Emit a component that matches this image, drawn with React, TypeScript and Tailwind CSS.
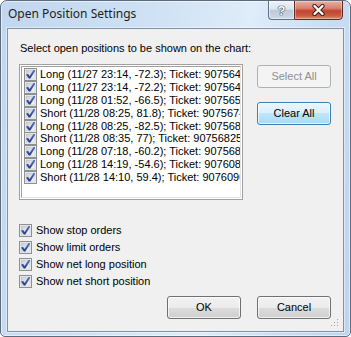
import React from "react";

const items = [
  "Long (11/27 23:14, -72.3); Ticket: 90756471",
  "Long (11/27 23:14, -72.2); Ticket: 90756472",
  "Long (11/28 01:52, -66.5); Ticket: 90756538",
  "Short (11/28 08:25, 81.8); Ticket: 90756749",
  "Long (11/28 08:25, -82.5); Ticket: 90756812",
  "Short (11/28 08:35, 77); Ticket: 90756825",
  "Long (11/28 07:18, -60.2); Ticket: 90756877",
  "Long (11/28 14:19, -54.6); Ticket: 90760835",
  "Short (11/28 14:10, 59.4); Ticket: 90760902",
];

const options = [
  "Show stop orders",
  "Show limit orders",
  "Show net long position",
  "Show net short position",
];

function Check() {
  return (
    <svg width="13" height="13" viewBox="0 0 13 13" className="shrink-0 block">
      <defs>
        <linearGradient id="cbg" x1="0" y1="0" x2="1" y2="1">
          <stop offset="0" stopColor="#c9ced5" />
          <stop offset="1" stopColor="#f7f7f7" />
        </linearGradient>
        <linearGradient id="cbm" x1="0" y1="0" x2="0" y2="1">
          <stop offset="0" stopColor="#6079c4" />
          <stop offset="1" stopColor="#1f3a8a" />
        </linearGradient>
      </defs>
      <rect x="0.5" y="0.5" width="12" height="12" fill="#f4f4f4" stroke="#8f8f8f" />
      <rect x="2" y="2" width="9" height="9" fill="url(#cbg)" stroke="#b5b9bf" strokeWidth="0.5" />
      <polygon
        points="2.5,6 4.2,6 5.6,8 9.4,2 11,2 11,3.2 6.3,10.5 4.9,10.5 2.5,7.6"
        fill="url(#cbm)"
      />
    </svg>
  );
}

function WinButton({
  label,
  variant = "normal",
}: {
  label: string;
  variant?: "normal" | "default" | "disabled";
}) {
  const cls =
    variant === "disabled"
      ? "border-[#adb2b5] bg-[#f4f4f4] text-[#8f8f8f]"
      : variant === "default"
      ? "border-[#3c7fb1] bg-[linear-gradient(#eaf6fd_0%,#d9f0fc_50%,#bee6fd_50%,#a7d9f5_100%)] text-black shadow-[inset_0_0_0_1px_rgba(255,255,255,0.7)]"
      : "border-[#707070] bg-[linear-gradient(#f2f2f2_0%,#ebebeb_50%,#dddddd_50%,#cfcfcf_100%)] text-black shadow-[inset_0_0_0_1px_rgba(255,255,255,0.7)]";
  return (
    <div
      className={`w-[74px] h-[23px] rounded-[3px] border flex items-center justify-center leading-[13px] ${cls}`}
    >
      {label}
    </div>
  );
}

export default function App() {
  return (
    <div className="w-[351px] h-[337px] flex flex-col rounded-t-[7px] rounded-b-[5px] border border-[#5c6c7e] overflow-hidden bg-[linear-gradient(100deg,#c1d7ef_0%,#cde0f4_35%,#dfecf9_62%,#cadcf2_82%,#bed4ee_100%)] shadow-[inset_0_0_0_1px_rgba(255,255,255,0.55)]">
      {/* Title bar */}
      <div className="h-[27px] flex items-start justify-between shrink-0">
        <div className="pl-[7px] pt-[5px] text-[12px] leading-[16px] text-[#1e1e1e] font-['Noto_Sans',sans-serif]">
          Open Position Settings
        </div>
        <div className="flex -mt-[1px] mr-[7px]">
          <div className="w-[26px] h-[20px] rounded-bl-[4px] border border-[#5f7187] border-r-0 bg-[linear-gradient(#eef3f8_0%,#dce5ef_45%,#bccadb_52%,#cbd9e8_100%)] flex items-center justify-center shadow-[inset_0_0_0_1px_rgba(255,255,255,0.5)]">
            <span className="text-white font-bold text-[13px] leading-[13px] font-['Liberation_Sans',sans-serif] [text-shadow:0_0_1px_#2b3a4a,0_0_1px_#2b3a4a,0_0_1px_#2b3a4a]">
              ?
            </span>
          </div>
          <div className="w-[49px] h-[20px] rounded-br-[4px] border border-[#5a2a22] bg-[linear-gradient(#eab0a3_0%,#d9806d_40%,#c2452e_55%,#cb5a40_80%,#dc8a6e_100%)] flex items-center justify-center shadow-[inset_0_0_0_1px_rgba(255,255,255,0.35)]">
            <svg width="13" height="12" viewBox="0 0 13 12">
              <path d="M2.5 2 L10.5 10 M10.5 2 L2.5 10" stroke="#3b1a14" strokeWidth="4.2" strokeLinecap="round" />
              <path d="M2.5 2 L10.5 10 M10.5 2 L2.5 10" stroke="#ffffff" strokeWidth="2.4" strokeLinecap="round" />
            </svg>
          </div>
        </div>
      </div>

      {/* Client area */}
      <div className="flex-1 mx-[6px] mb-[4px] border border-[#8092a7] bg-[#f0f0f0] relative pl-[11px] pt-[13px] flex flex-col font-['Liberation_Sans',sans-serif] text-[11px] text-black shadow-[0_0_0_1px_rgba(255,255,255,0.45)]">
        <div className="ml-[1px] h-[13px] leading-[13px] whitespace-nowrap">
          Select open positions to be shown on the chart:
        </div>

        <div className="mt-[9px] flex gap-[14px]">
          <div className="w-[224px] h-[136px] border border-[#a0a0a0] bg-white p-[1px]">
            <div className="w-full h-full border border-t-[#a0a0a0] border-l-[#a0a0a0] border-r-[#e3e3e3] border-b-[#e3e3e3] overflow-hidden pl-[2px] pt-[1px]">
              {items.map((t) => (
                <div key={t} className="h-[12.9px] flex items-center gap-[3px] whitespace-nowrap leading-[13px]">
                  <Check />
                  <span>{t}</span>
                </div>
              ))}
            </div>
          </div>
          <div className="mt-[1px] flex flex-col gap-[14px]">
            <WinButton label="Select All" variant="disabled" />
            <WinButton label="Clear All" variant="default" />
          </div>
        </div>

        <div className="mt-[22px] flex flex-col">
          {options.map((o) => (
            <div key={o} className="h-[17px] flex items-center gap-[4px] whitespace-nowrap leading-[13px]">
              <Check />
              <span>{o}</span>
            </div>
          ))}
        </div>

        <div className="mt-[6px] flex justify-end gap-[16px] pr-[12px]">
          <WinButton label="OK" />
          <WinButton label="Cancel" />
        </div>

        <svg width="9" height="9" viewBox="0 0 9 9" className="absolute right-[4px] bottom-[4px]">
          {[
            [7, 1],
            [4, 4],
            [7, 4],
            [1, 7],
            [4, 7],
            [7, 7],
          ].map(([x, y]) => (
            <g key={`${x}-${y}`}>
              <rect x={x + 0.6} y={y + 0.6} width="1.4" height="1.4" fill="#ffffff" />
              <rect x={x} y={y} width="1.2" height="1.2" fill="#a8acb3" />
            </g>
          ))}
        </svg>
      </div>
    </div>
  );
}
